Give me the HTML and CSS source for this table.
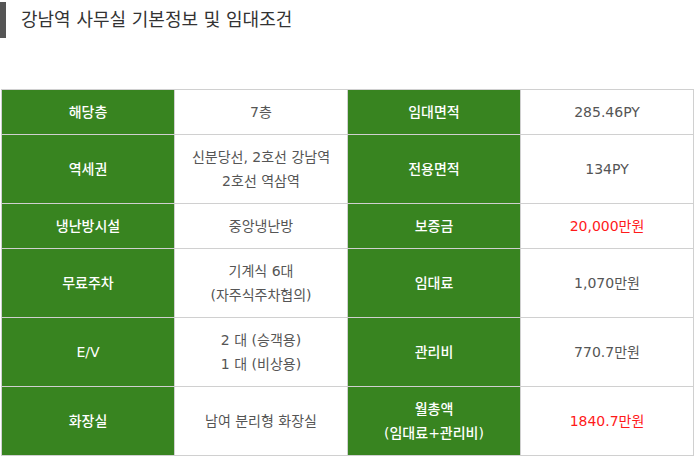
FILE: index.html
```html
<!DOCTYPE html>
<html lang="ko">
<head>
<meta charset="utf-8">
<link rel="stylesheet" href="styles.css">
</head>
<body>
<div class="page">
  <h2 class="title">강남역 사무실 기본정보 및 임대조건</h2>
  <table class="info">
    <tr class="r1">
      <th>해당층</th><td>7층</td>
      <th>임대면적</th><td>285.46PY</td>
    </tr>
    <tr>
      <th>역세권</th><td>신분당선, 2호선 강남역<br>2호선 역삼역</td>
      <th>전용면적</th><td>134PY</td>
    </tr>
    <tr class="r1">
      <th>냉난방시설</th><td>중앙냉난방</td>
      <th>보증금</th><td class="red">20,000만원</td>
    </tr>
    <tr>
      <th>무료주차</th><td>기계식 6대<br>(자주식주차협의)</td>
      <th>임대료</th><td>1,070만원</td>
    </tr>
    <tr>
      <th>E/V</th><td>2 대 (승객용)<br>1 대 (비상용)</td>
      <th>관리비</th><td>770.7만원</td>
    </tr>
    <tr>
      <th>화장실</th><td>남여 분리형 화장실</td>
      <th>월총액<br>(임대료+관리비)</th><td class="red">1840.7만원</td>
    </tr>
  </table>
</div>
</body>
</html>
```
FILE: styles.css
```css
html, body {
  margin: 0;
  padding: 0;
  background: #fff;
}
.page {
  font-family: "DejaVu Sans", "Noto Sans CJK KR", sans-serif;
  padding-left: 1px;
}
.title {
  margin: 2px 0 0 -1px;
  height: 36px;
  line-height: 36px;
  border-left: 6px solid #555;
  padding-left: 15px;
  font-size: 18px;
  font-weight: 400;
  color: #333;
}
.info {
  margin-top: 51px;
  width: 693px;
  border-collapse: collapse;
  table-layout: fixed;
  font-size: 14px;
}
.info th, .info td {
  border: 1px solid #d0d0d0;
  padding: 10px 0;
  line-height: 24px;
  text-align: center;
  vertical-align: middle;
}
.info th {
  background: #388420;
  color: #fff;
  font-weight: 500;
}
.info td {
  color: #555;
  font-weight: 400;
}
.info td.red {
  color: #ff1a1a;
}
```
